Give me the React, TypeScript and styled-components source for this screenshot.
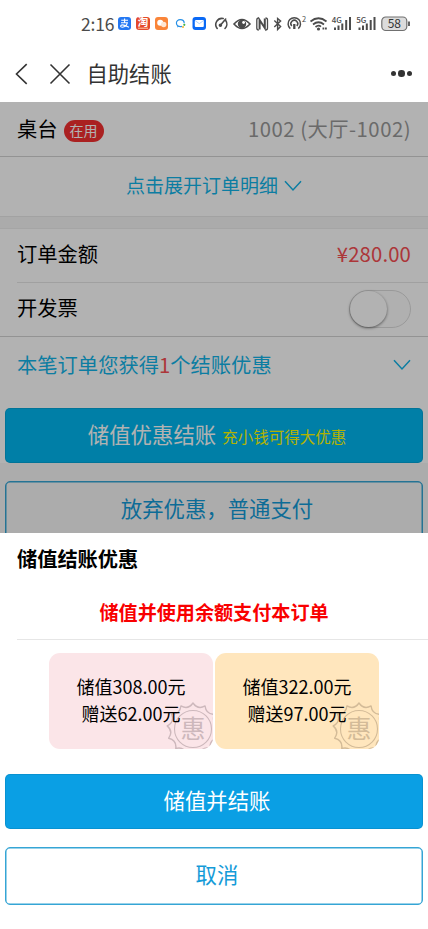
import React from 'react';
import styled, { createGlobalStyle } from 'styled-components';

const GlobalStyle = createGlobalStyle`
  * { box-sizing: border-box; }
  body {
    margin: 0;
    background: #fff;
    font-family: "Noto Sans CJK SC", "Noto Sans", sans-serif;
    color: #000;
  }
  button { font-family: inherit; margin: 0; padding: 0; }
`;

const Screen = styled.div`
  width: 428px;
  height: 929px;
  display: flex;
  flex-direction: column;
  overflow: hidden;
  background: #fff;
`;

const StatusBar = styled.div`
  height: 46px;
  display: flex;
  align-items: center;
  padding: 1px 16px 0 81px;
  color: #4b4b4b;
`;

const Clock = styled.span`
  width: 36px;
  font-size: 17.5px;
  line-height: 24px;
  letter-spacing: -0.2px;
  white-space: nowrap;
`;

const StatusIcons = styled.svg`
  display: block;
  width: 295px;
  height: 24px;
  font-family: "Noto Sans CJK SC", sans-serif;
`;

const NavBar = styled.header`
  height: 56px;
  flex: none;
  display: flex;
  align-items: center;
  padding: 0 16px 1px 14px;
  color: #333;
`;

const NavIcon = styled.svg<{ $w: number; $gap: number }>`
  width: ${(p) => p.$w}px;
  height: 22px;
  margin-right: ${(p) => p.$gap}px;
  fill: none;
  stroke: #333;
  stroke-width: 1.6;
`;

const NavTitle = styled.h1`
  margin: 0;
  flex: 1;
  font-size: 21.3px;
  font-weight: 400;
  line-height: 30px;
  padding-bottom: 2px;
`;

const Dots = styled.div`
  display: flex;
  align-items: center;
  gap: 2.5px;
`;

const Dot = styled.i<{ $s: number }>`
  width: ${(p) => p.$s}px;
  height: ${(p) => p.$s}px;
  border-radius: 50%;
  background: #333;
`;

const Page = styled.main`
  position: relative;
  height: 431px;
  flex: none;
  overflow: hidden;
  background: #f7f7f7;
`;

const Mask = styled.div`
  position: absolute;
  inset: 0;
  background: rgba(0, 0, 0, 0.3);
`;

const Panel = styled.section`
  background: #fff;
`;

const Row = styled.div<{ $h: number; $link?: boolean; $center?: boolean }>`
  height: ${(p) => p.$h}px;
  padding: 0 17px;
  display: flex;
  align-items: center;
  justify-content: ${(p) => (p.$center ? 'center' : 'space-between')};
  font-size: ${(p) => (p.$center ? 19 : 20.3)}px;
  line-height: 28px;
  white-space: nowrap;
  color: ${(p) => (p.$link ? '#12b4e8' : '#000')};
`;

const Label = styled.span<{ $lift?: number }>`
  display: flex;
  align-items: center;
  padding-bottom: ${(p) => p.$lift ?? 4}px;
`;

const Divider = styled.div<{ $inset?: boolean; $dark?: boolean }>`
  height: 1px;
  margin-left: ${(p) => (p.$inset ? 17 : 0)}px;
  background: ${(p) => (p.$dark ? '#d3d3d3' : '#e6e6e6')};
`;

const Gap = styled.div`
  height: 13px;
  background: #f5f5f5;
  border-top: 1px solid #e8e8e8;
  border-bottom: 1px solid #ededed;
`;

const Tag = styled.span`
  width: 40px;
  height: 22px;
  margin: 6px 0 0 6px;
  border-radius: 11px;
  background: #f43030;
  color: #fff;
  font-size: 14px;
  line-height: 20px;
  text-align: center;
`;

const TableNo = styled.span`
  color: #999;
  letter-spacing: 0.5px;
  padding-bottom: 3px;
`;

const Price = styled.span`
  color: #f64e52;
  padding-bottom: 5px;
  letter-spacing: 0.15px;
`;

const Count = styled.em`
  font-style: normal;
  color: #f64e52;
`;

const Switch = styled.span`
  width: 62px;
  height: 38px;
  border-radius: 19px;
  border: 1px solid #dcdcdc;
  background: #fdfdfd;
  margin-bottom: 1px;
`;

const Knob = styled.span`
  display: block;
  width: 37px;
  height: 36px;
  border-radius: 50%;
  background: #fff;
  box-shadow: 0 1px 3px rgba(0, 0, 0, 0.5);
`;

const Chevron = styled.svg<{ $gap?: number }>`
  width: 18px;
  height: 12px;
  margin: 0 0 2px ${(p) => p.$gap ?? 0}px;
  fill: none;
  stroke: #12b4e8;
  stroke-width: 1.5;
`;

const ActionArea = styled.div<{ $top: number }>`
  display: flex;
  flex-direction: column;
  gap: 18px;
  padding: ${(p) => p.$top}px 5px 0;
`;

const Button = styled.button<{ $fill?: string; $h: number }>`
  height: ${(p) => p.$h}px;
  flex: none;
  display: flex;
  align-items: baseline;
  justify-content: center;
  padding: ${(p) => (p.$fill ? 10 : 11)}px 0 0 6px;
  border-radius: 5px;
  border: ${(p) => (p.$fill ? '1px solid rgba(0, 90, 120, 0.18)' : '1.5px solid #35a5d5')};
  box-shadow: ${(p) => (p.$fill ? 'none' : 'inset 0 0 0 0.5px #35a5d5')};
  background: ${(p) => p.$fill ?? 'transparent'};
  color: ${(p) => (p.$fill ? '#fff' : '#149bd8')};
  font-size: 21.4px;
  line-height: 30px;
  white-space: nowrap;
`;

const Hint = styled.small`
  margin-left: 6px;
  font-size: 15.5px;
  line-height: 20px;
  color: #ffff00;
`;

const Sheet = styled.section`
  flex: 1;
  background: #fff;
`;

const SheetTitle = styled.h2`
  margin: 0;
  padding: 11px 17px 0;
  font-size: 20.2px;
  font-weight: 700;
  line-height: 30px;
`;

const SheetLead = styled.p`
  margin: 0;
  height: 65px;
  padding-top: 24px;
  text-align: center;
  font-size: 19.1px;
  font-weight: 700;
  line-height: 28px;
  color: #f90000;
`;

const Offers = styled.div`
  display: flex;
  justify-content: center;
  gap: 2px;
  padding-top: 13px;
`;

const Offer = styled.article<{ $bg: string }>`
  position: relative;
  width: 164px;
  height: 96px;
  padding-top: 20px;
  border-radius: 11px;
  overflow: hidden;
  background: ${(p) => p.$bg};
  text-align: center;
  font-size: 18px;
  line-height: 27px;
`;

const OfferLine = styled.div`
  position: relative;
  z-index: 1;
`;

const Stamp = styled.svg`
  position: absolute;
  right: -7px;
  bottom: -8px;
  width: 54px;
  height: 56px;
  fill: none;
  font-family: "Noto Sans CJK SC", sans-serif;
`;

const sealPath = (() => {
  const n = 13;
  const step = (2 * Math.PI) / n;
  const pt = (r: number, a: number) =>
    `${(27 + r * Math.sin(a)).toFixed(2)} ${(28 - r * Math.cos(a)).toFixed(2)}`;
  let d = `M${pt(26, 0)}`;
  for (let i = 0; i < n; i++) {
    const a = i * step;
    d += `Q${pt(19.6, a + step / 2)} ${pt(26, a + step)}`;
  }
  return d + 'Z';
})();

function OfferCard({ bg, ink, pay, gift }: { bg: string; ink: string; pay: string; gift: string }) {
  return (
    <Offer $bg={bg}>
      <Stamp viewBox="0 0 54 56" stroke={ink}>
        <path d={sealPath} strokeWidth="1.4" strokeLinejoin="round" />
        <circle cx="27" cy="28" r="18.500" strokeWidth="1.1" />
        <text x="27" y="37" fontSize="25" textAnchor="middle" fill={ink} stroke="none">惠</text>
      </Stamp>
      <OfferLine>储值{pay}元</OfferLine>
      <OfferLine>赠送{gift}元</OfferLine>
    </Offer>
  );
}

function Signal({ x, label }: { x: number; label: string }) {
  return (
    <g>
      <text x={x - 0.8} y="10.500" fontSize="8" fontWeight="500" fill="#4b4b4b">{label}</text>
      <path
        d={`M${x + 2.500} 15.5v2.5M${x + 6} 13.5v4.500M${x + 9.800} 11.500v6.500M${x + 13.700} 8V18M${x + 17.500} 5v13`}
        stroke="#4b4b4b"
        strokeWidth="2"
      />
    </g>
  );
}

function StatusGlyphs() {
  return (
    <StatusIcons viewBox="117 0 295 24" fill="none">
      <rect x="118" y="5" width="13" height="13" rx="3" fill="#2478f3" />
      <path d="M121.2 8.3h6.8M124.6 6.5v4M121 10.7h6.4c-.6 2.2-2.7 4.5-5 4.5-2.5 0-2.2-2.3 0-2.3 2.6 0 4.4 1.4 6.6 2.4" stroke="#fff" strokeWidth="1.1" />
      <rect x="136" y="5" width="14" height="13" rx="3" fill="#e4492b" />
      <text x="143" y="14.3" fontSize="10.5" fontWeight="700" textAnchor="middle" fill="#fff">淘</text>
      <path d="M138 16.2h10" stroke="#ffd0a8" strokeWidth="1" />
      <rect x="155" y="5" width="13" height="13" rx="3" fill="#fa8539" />
      <circle cx="160.2" cy="10.7" r="3" fill="#fff" />
      <circle cx="163.7" cy="12.5" r="2.7" fill="#ffe6d3" />
      <path d="M182 14.300c-3 .8-5.600-.6-5.600-3.200 0-2 1.600-3.400 3.800-3.400s4 1.500 4 3.600" stroke="#2790e6" strokeWidth="1.200" />
      <path d="M177.500 13.500l-.3 2 2-.9" fill="#2790e6" />
      <circle cx="184.300" cy="12.800" r="1.100" fill="#45b649" />
      <circle cx="183" cy="15" r="1" fill="#f5b32d" />
      <rect x="192.500" y="5" width="13.500" height="13" rx="3" fill="#0a69f5" />
      <rect x="194.800" y="8" width="9" height="7" rx="1" fill="#fff" />
      <path d="M195 8.500l4.300 3.200 4.300-3.200" stroke="#9cc5ff" strokeWidth=".8" />

      <g stroke="#4b4b4b" strokeWidth="1.600">
        <path d="M217.200 16.500a6.200 6.200 0 0 1 6-10M225.700 8.500a6.200 6.200 0 0 1-.7 8M220.200 13.500l5.500-6.500" strokeLinecap="round" />
        <circle cx="220.400" cy="13.300" r="1" fill="#4b4b4b" />
        <path d="M234 12q8-9 16 0-8 9-16 0z" />
        <circle cx="242" cy="12" r="3.400" fill="#4b4b4b" />
      </g>
      <circle cx="243.600" cy="10.500" r="1.400" fill="#fff" />
      <path d="M259 6h-.2q-2 0-2 2v8q0 2 2 2M265.500 18q2 0 2-2V8q0-2-2-2" stroke="#4b4b4b" strokeWidth="1.300" />
      <path d="M259.600 17.500V8l5.200 8V6.500" stroke="#4b4b4b" strokeWidth="2" />
      <path d="M274.300 8.500l6.300 6-3 3V6.500l3 2.500-6.300 6" stroke="#4b4b4b" strokeWidth="1.400" />
      <g stroke="#4b4b4b" strokeWidth="1.500">
        <path d="M290.300 16.600a6.200 6.200 0 1 1 8 0M291.800 14a3.400 3.400 0 1 1 5 0" />
        <path d="M294.300 12v5" strokeWidth="2.300" />
      </g>
      <text x="302" y="9.500" fontSize="7.500" fill="#4b4b4b">2</text>
      <g stroke="#4b4b4b" strokeWidth="1.700">
        <path d="M310.500 9.500q8-6.500 16 0M313 12.500q5.500-4.500 11 0M315.500 15q3-2.500 5.500-.3" />
      </g>
      <circle cx="318.500" cy="17" r="1.600" fill="#4b4b4b" />
      <path d="M322.500 16.500h1.800M325 16.500h1.800" stroke="#4b4b4b" strokeWidth="1.800" />
      <Signal x={332.500} label="4G" />
      <Signal x={357} label="5G" />
      <rect x="381.800" y="5" width="25" height="13.500" rx="4" fill="#dcdcdc" stroke="#707070" strokeWidth="1.200" />
      <path d="M409 9.500v4.500" stroke="#4b4b4b" strokeWidth="1.700" />
      <text x="394.300" y="16" fontSize="12" textAnchor="middle" fill="#333">58</text>
    </StatusIcons>
  );
}

function Down({ gap }: { gap?: number }) {
  return (
    <Chevron $gap={gap} viewBox="0 0 18 12">
      <path d="M1 1.200l8 8.800 8-8.800" />
    </Chevron>
  );
}

export default function App() {
  return (
    <Screen>
      <GlobalStyle />
      <StatusBar>
        <Clock>2:16</Clock>
        <StatusGlyphs />
      </StatusBar>
      <NavBar>
        <NavIcon $w={14} $gap={21} viewBox="0 0 14 22"><path d="M12.700 1.200L2.500 11l10.200 9.800" /></NavIcon>
        <NavIcon $w={22} $gap={15.500} viewBox="0 0 22 22"><path d="M1.500 1.500l19 19M20.500 1.500l-19 19" /></NavIcon>
        <NavTitle>自助结账</NavTitle>
        <Dots><Dot $s={5} /><Dot $s={6.5} /><Dot $s={5} /></Dots>
      </NavBar>
      <Page>
        <Panel>
          <Row $h={54}>
            <Label $lift={3}>桌台<Tag>在用</Tag></Label>
            <TableNo>1002 (大厅-1002)</TableNo>
          </Row>
          <Divider $dark />
          <Row $h={59} $link $center>
            <Label>点击展开订单明细</Label>
            <Down gap={6} />
          </Row>
        </Panel>
        <Gap />
        <Panel>
          <Row $h={53}>
            <Label $lift={5}>订单金额</Label>
            <Price>¥280.00</Price>
          </Row>
          <Divider $inset />
          <Row $h={53}>
            <Label $lift={5}>开发票</Label>
            <Switch><Knob /></Switch>
          </Row>
          <Divider $dark />
          <Row $h={57} $link>
            <Label $lift={4}>本笔订单您获得<Count>1</Count>个结账优惠</Label>
            <Down />
          </Row>
          <ActionArea $top={14}>
            <Button $h={55} $fill="#00b7f0">储值优惠结账<Hint>充小钱可得大优惠</Hint></Button>
          </ActionArea>
        </Panel>
        <ActionArea $top={18}>
          <Button $h={58}>放弃优惠，普通支付</Button>
        </ActionArea>
        <Mask />
      </Page>
      <Sheet>
        <SheetTitle>储值结账优惠</SheetTitle>
        <SheetLead>储值并使用余额支付本订单</SheetLead>
        <Divider $inset />
        <Offers>
          <OfferCard bg="#fbe5e8" ink="#cdb8bc" pay="308.00" gift="62.00" />
          <OfferCard bg="#ffe6bd" ink="#d3bb98" pay="322.00" gift="97.00" />
        </Offers>
        <ActionArea $top={25}>
          <Button $h={55} $fill="#0a9fe4">储值并结账</Button>
          <Button $h={58}>取消</Button>
        </ActionArea>
      </Sheet>
    </Screen>
  );
}
